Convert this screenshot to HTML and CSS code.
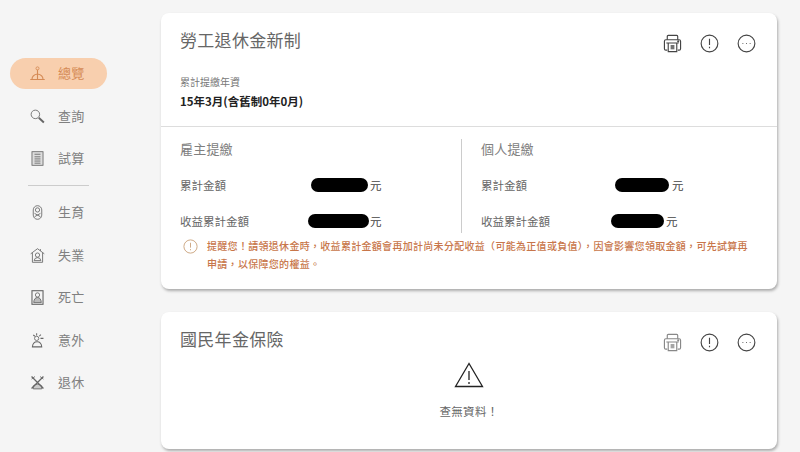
FILE: index.html
```html
<!DOCTYPE html>
<html lang="zh-Hant">
<head>
    <meta charset="UTF-8">
    <title>總覽</title>
    <link rel="stylesheet" href="styles.css">
</head>
<body>
    <svg class="icon-defs" width="0" height="0">
        <symbol id="i-print" viewBox="0 0 20 20">
            <path d="M4.500 6V2.500q0-1 1-1h9q1 0 1 1V6" />
            <path d="M3 6h14q1.500 0 1.500 1.500v8q0 1.500-1.500 1.500h-1.500M4.500 17H3q-1.500 0-1.500-1.500v-8Q1.500 6 3 6" />
            <path d="M3.500 9.500h13M5.500 9.500V18.500h9V9.500M8 12.500h4M8 14h4M8 15.500h4" />
            <circle cx="16" cy="7.800" r=".5" />
        </symbol>
        <symbol id="i-info" viewBox="0 0 20 20">
            <circle cx="10" cy="10" r="8.800" />
            <path d="M10 5v6.500M10 13.500v1.500" />
        </symbol>
        <symbol id="i-more" viewBox="0 0 20 20">
            <circle cx="10" cy="10" r="8.800" />
            <path d="M5.800 10h.8M9.600 10h.8M13.400 10h.8" />
        </symbol>
    </svg>

    <div class="page">
        <nav class="sidebar">
            <a class="nav-item active">
                <svg class="nav-icon" viewBox="0 0 20 20"><circle cx="10" cy="4" r="1.800" /><path d="M10 5.500V17M1.500 17h17M3.500 17q0-5.500 6.500-6.500q6.500 1 6.500 6.500" stroke-width="1.300" /></svg>
                <span>總覽</span>
            </a>
            <a class="nav-item">
                <svg class="nav-icon" viewBox="0 0 20 20"><circle cx="7.500" cy="7.500" r="5" /><path d="M11.500 11.500l6 5.500" stroke-width="2.200" /></svg>
                <span>查詢</span>
            </a>
            <a class="nav-item">
                <svg class="nav-icon" viewBox="0 0 20 20"><rect x="3.500" y="2" width="13" height="16" fill="#ddd" /><path d="M6.500 5h7M6.500 8h7M6.500 10.500h7M6.500 13h7M6.500 15.500h7" /></svg>
                <span>試算</span>
            </a>
            <div class="nav-divider"></div>
            <a class="nav-item">
                <svg class="nav-icon" viewBox="0 0 20 20"><rect x="5" y="2" width="10" height="16" rx="5" /><circle cx="10" cy="7" r="2.500" /><path d="M6.500 11l7 4M13.500 11l-7 4" /></svg>
                <span>生育</span>
            </a>
            <a class="nav-item">
                <svg class="nav-icon" viewBox="0 0 20 20"><path d="M2 8l8-6 8 6M4 7v11h12V7M13.500 2.500v2" /><circle cx="10" cy="9.500" r="2.500" /><path d="M6 16q.5-3.500 4-3.500t4 3.500z" /></svg>
                <span>失業</span>
            </a>
            <a class="nav-item">
                <svg class="nav-icon" viewBox="0 0 20 20"><rect x="3.500" y="2" width="13" height="16" stroke-width="1.300" /><circle cx="10" cy="7" r="2.500" /><path d="M5.500 16q.5-6 4.500-6t4.500 6z" fill="#bbb" /></svg>
                <span>死亡</span>
            </a>
            <a class="nav-item">
                <svg class="nav-icon" viewBox="0 0 20 20"><circle cx="9" cy="7.500" r="2.500" /><path d="M4 17.500h11q-.5-6-5.500-6t-5.500 6zM5 3.500l2 1.500M9 1.500v2.500M14 3l-2 2M17 7.500h-3.500" stroke-width="1.200" /></svg>
                <span>意外</span>
            </a>
            <a class="nav-item">
                <svg class="nav-icon" viewBox="0 0 20 20"><path d="M5 14q5-4 10 0v3.500H5zM3 6l4-3M13 3l4 3" fill="#ccc" /><path d="M3 3l14 14M17 3L3 17" stroke-width="1.500" /></svg>
                <span>退休</span>
            </a>
        </nav>

        <main class="content">
            <section class="card card-new">
                <header class="card-head">
                    <h2 class="card-title">勞工退休金新制</h2>
                    <div class="card-tools">
                        <svg class="tool"><use href="#i-print" /></svg>
                        <svg class="tool"><use href="#i-info" /></svg>
                        <svg class="tool"><use href="#i-more" /></svg>
                    </div>
                </header>
                <div class="years">
                    <p class="years-label">累計提繳年資</p>
                    <p class="years-value">15年3月(含舊制0年0月)</p>
                </div>
                <div class="split">
                    <div class="split-col">
                        <h3 class="split-title">雇主提繳</h3>
                        <div class="amount"><span class="amount-label">累計金額</span><span class="blob blob-a"></span><span class="unit">元</span></div>
                        <div class="amount"><span class="amount-label">收益累計金額</span><span class="blob blob-b"></span><span class="unit">元</span></div>
                    </div>
                    <div class="split-col split-right">
                        <h3 class="split-title">個人提繳</h3>
                        <div class="amount"><span class="amount-label">累計金額</span><span class="blob blob-c"></span><span class="unit">元</span></div>
                        <div class="amount"><span class="amount-label">收益累計金額</span><span class="blob blob-d"></span><span class="unit">元</span></div>
                    </div>
                </div>
                <div class="notice">
                    <svg class="notice-icon"><use href="#i-info" /></svg>
                    <p>提醒您！請領退休金時，收益累計金額會再加計尚未分配收益（可能為正值或負值），因會影響您領取金額，可先試算再申請，以保障您的權益。</p>
                </div>
            </section>

            <section class="card card-national">
                <header class="card-head">
                    <h2 class="card-title">國民年金保險</h2>
                    <div class="card-tools">
                        <svg class="tool tool-muted"><use href="#i-print" /></svg>
                        <svg class="tool"><use href="#i-info" /></svg>
                        <svg class="tool"><use href="#i-more" /></svg>
                    </div>
                </header>
                <div class="empty">
                    <svg class="empty-icon" viewBox="0 0 30 26"><path d="M15 1.500L1.500 24.500h27zM15 9v9M15 20v2" /></svg>
                    <p>查無資料！</p>
                </div>
            </section>
        </main>
    </div>
</body>
</html>
```

FILE: styles.css
```css
* {
    box-sizing: border-box;
}

html, body {
    margin: 0;
    height: 452px;
    overflow: hidden;
}

body {
    background: #f5f5f5;
    font-family: "Noto Sans CJK TC", "Noto Sans", sans-serif;
    color: #555;
}

p, h2, h3 {
    margin: 0;
    font-weight: 400;
}

.icon-defs {
    display: block;
    height: 0;
}

.page {
    display: flex;
    align-items: flex-start;
}

/* sidebar */
.sidebar {
    width: 161px;
    flex: none;
    padding: 58px 54px 0 10px;
}

.nav-item {
    display: flex;
    align-items: center;
    height: 31px;
    margin-bottom: 11.500px;
    padding-left: 19px;
    border-radius: 16px;
    font-size: 13px;
    letter-spacing: .3px;
    color: #808080;
}

.nav-item span {
    margin-top: -2px;
}

.nav-item.active {
    background: #f8cfae;
    color: #d58a55;
}

.nav-icon {
    width: 17px;
    height: 17px;
    margin-right: 12px;
    fill: none;
    stroke: #666;
    stroke-width: 1;
}

.active .nav-icon {
    stroke: #d58a55;
}

.nav-divider {
    width: 61px;
    height: 1px;
    margin: -1px 0 11.500px 18px;
    background: #ccc;
}

/* cards */
.content {
    width: 616px;
    padding-top: 13px;
}

.card {
    background: #fff;
    border-radius: 8px;
    box-shadow: 1px 2px 3px rgba(0, 0, 0, .3);
}

.card-new {
    height: 276px;
    margin-bottom: 23px;
}

.card-national {
    height: 137px;
}

.card-head {
    display: flex;
    justify-content: space-between;
    padding: 16px 21px 0 19px;
}

.card-title {
    font-size: 17px;
    line-height: 22px;
    letter-spacing: .3px;
    color: #666;
}

.card-tools {
    display: flex;
    gap: 18px;
    padding-top: 5px;
}

.tool {
    width: 19px;
    height: 19px;
    fill: none;
    stroke: #444;
    stroke-width: 1.200;
}

.tool-muted {
    stroke: #888;
}

.years {
    padding: 22px 19px 0;
}

.years-label {
    font-size: 10px;
    line-height: 14px;
    color: #777;
}

.years-value {
    margin-top: 4px;
    font-size: 11.500px;
    line-height: 16px;
    font-weight: 700;
    color: #222;
}

.split {
    display: flex;
    margin-top: 17px;
    border-top: 1px solid #ddd;
    padding-top: 12px;
}

.split-col {
    width: 300px;
    height: 94px;
    padding-left: 19px;
}

.split-right {
    border-left: 1px solid #ccc;
}

.split-title {
    font-size: 13px;
    line-height: 20px;
    letter-spacing: .2px;
    color: #808080;
}

.amount {
    display: flex;
    align-items: center;
    height: 18px;
    margin-top: 18px;
    font-size: 11.500px;
    color: #666;
}

.split-title + .amount {
    margin-top: 17px;
}

.amount-label {
    width: 130px;
}

.blob {
    height: 14px;
    background: #000;
    border-radius: 7px;
}

.blob-a {
    width: 57px;
    margin: 0 2px 0 1px;
}

.blob-b {
    width: 61px;
    margin: 0 1px 0 -2px;
}

.blob-c {
    width: 54px;
    margin: 0 3px 0 4px;
}

.blob-d {
    width: 53px;
    margin-right: 2px;
}

.unit {
    font-size: 11.500px;
    color: #444;
}

.notice {
    display: flex;
    gap: 9px;
    padding: 4px 21px 0 22px;
    color: #c8764a;
}

.notice-icon {
    width: 15px;
    height: 15px;
    flex: none;
    margin-top: 2px;
    fill: none;
    stroke: #c9a27a;
    stroke-width: 1.200;
}

.notice p {
    font-size: 10px;
    line-height: 18px;
    font-weight: 500;
    letter-spacing: .3px;
}

.empty {
    display: flex;
    flex-direction: column;
    align-items: center;
    margin-top: 10px;
}

.empty-icon {
    width: 30px;
    height: 26px;
    fill: none;
    stroke: #222;
    stroke-width: 1.300;
}

.empty p {
    margin-top: 15px;
    font-size: 11.500px;
    line-height: 16px;
    letter-spacing: .3px;
    color: #666;
}
```
